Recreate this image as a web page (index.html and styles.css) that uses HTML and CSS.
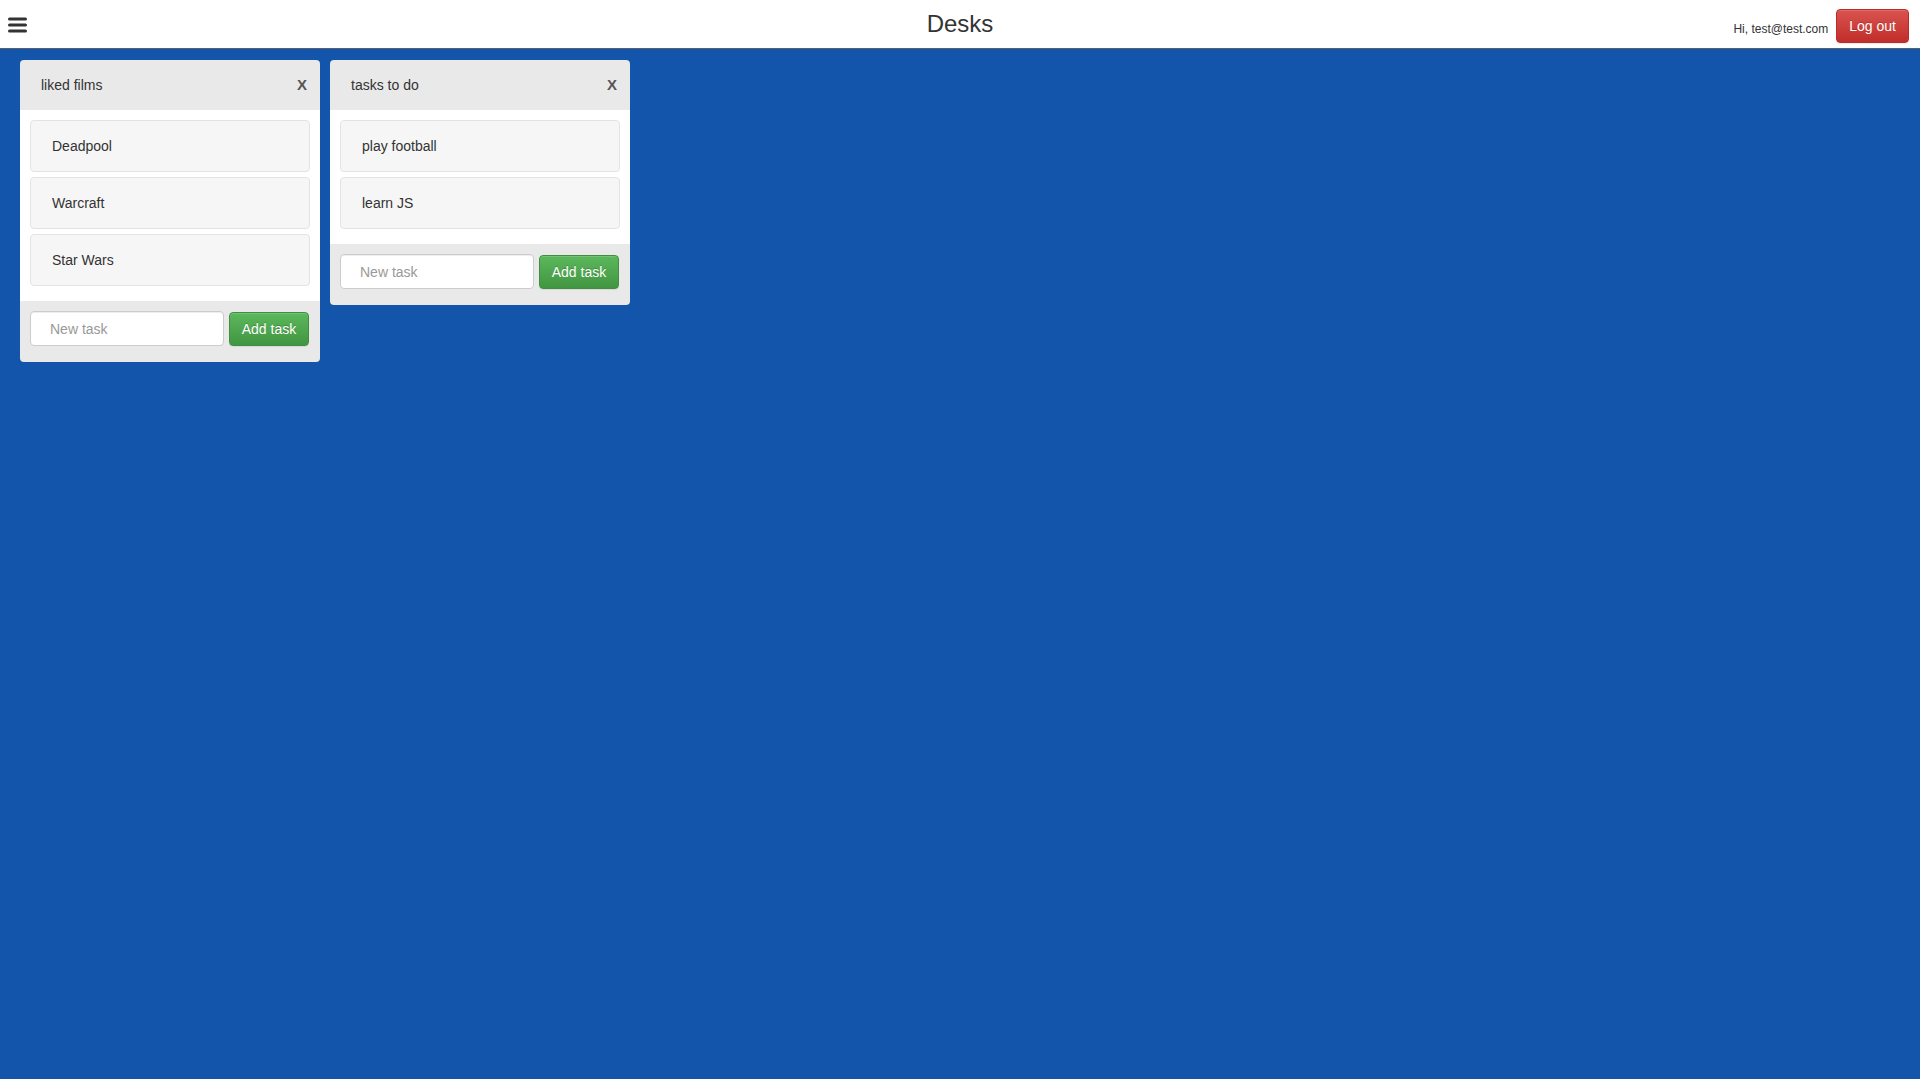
FILE: index.html
```html
<!DOCTYPE html>
<html>
<head>
<meta charset="utf-8">
<title>Desks</title>
<link rel="stylesheet" href="styles.css">
</head>
<body>
<header class="topbar">
  <div class="menu">
    <svg width="20" height="16" viewBox="0 0 20 16"><rect x="0" y="0.5" width="19" height="3" rx="1.5" fill="#333"/><rect x="0" y="6.5" width="19" height="3" rx="1.5" fill="#333"/><rect x="0" y="12.5" width="19" height="3" rx="1.5" fill="#333"/></svg>
  </div>
  <h1 class="title">Desks</h1>
  <div class="user">
    <span class="hello">Hi, test@test.com</span>
    <button class="btn btn-danger">Log out</button>
  </div>
</header>
<main class="board">
  <section class="desk">
    <div class="desk-head"><span>liked films</span><span class="close">X</span></div>
    <div class="desk-body">
      <div class="task">Deadpool</div>
      <div class="task">Warcraft</div>
      <div class="task">Star Wars</div>
    </div>
    <div class="desk-foot">
      <input class="input" type="text" placeholder="New task">
      <button class="btn btn-success">Add task</button>
    </div>
  </section>
  <section class="desk">
    <div class="desk-head"><span>tasks to do</span><span class="close">X</span></div>
    <div class="desk-body">
      <div class="task">play football</div>
      <div class="task">learn JS</div>
    </div>
    <div class="desk-foot">
      <input class="input" type="text" placeholder="New task">
      <button class="btn btn-success">Add task</button>
    </div>
  </section>
</main>
</body>
</html>
```

FILE: styles.css
```css
* { box-sizing: border-box; }
html, body { height: 100%; }
body {
  margin: 0;
  font-family: "Liberation Sans", Arial, Helvetica, sans-serif;
  font-size: 14px;
  line-height: 20px;
  color: #333;
  background: #1355ab;
  display: flex;
  flex-direction: column;
}
.topbar {
  height: 49px;
  background: #fff;
  border-bottom: 1px solid #5a5f6a;
  display: flex;
  align-items: center;
  position: relative;
  padding: 0 11px 0 8px;
}
.menu { width: 20px; height: 16px; margin-top: 1px; }
.menu svg { display: block; }
.title {
  position: absolute;
  left: 0; right: 0;
  top: 0;
  margin: 0;
  text-align: center;
  font-weight: normal;
  font-size: 24px;
  line-height: 48px;
  pointer-events: none;
  margin-top: 0;
}
.user {
  margin-left: auto;
  display: flex;
  align-items: center;
  gap: 8px;
  margin-top: 3px;
}
.hello { font-size: 12px; margin-top: 7px; }
.btn {
  font-family: inherit;
  font-size: 14px;
  line-height: 20px;
  padding: 6px 12px;
  border-radius: 4px;
  color: #fff;
  cursor: pointer;
  text-shadow: 0 -1px 0 rgba(0,0,0,.2);
  box-shadow: inset 0 1px 0 rgba(255,255,255,.15), 0 1px 1px rgba(0,0,0,.075);
  height: 34px;
}
.btn-danger {
  background: linear-gradient(to bottom, #d9534f 0, #c12e2a 100%);
  border: 1px solid #b92c28;
}
.btn-success {
  background: linear-gradient(to bottom, #5cb85c 0, #419641 100%);
  border: 1px solid #3e8f3e;
}
.board {
  flex: 1;
  display: flex;
  align-items: flex-start;
  gap: 10px;
  padding: 11px 20px;
}
.desk {
  width: 300px;
  background: #e9e9e9;
  border-radius: 4px;
  overflow: hidden;
}
.desk-head {
  height: 50px;
  display: flex;
  align-items: center;
  justify-content: space-between;
  padding: 0 13px 0 21px;
}
.close { font-weight: bold; font-size: 15px; color: #555; }
.desk-body {
  background: #fff;
  padding: 10px 10px 15px;
  display: flex;
  flex-direction: column;
  gap: 5px;
}
.task {
  background: #f6f6f6;
  border: 1px solid #e3e3e3;
  border-radius: 4px;
  padding: 15px 21px;
  height: 52px;
}
.desk-foot {
  display: flex;
  align-items: flex-end;
  gap: 5px;
  padding: 10px 11px 16px 10px;
}
.input {
  width: 194px;
  height: 35px;
  font-family: inherit;
  font-size: 14px;
  padding: 6px 19px;
  border: 1px solid #ccc;
  border-radius: 4px;
  box-shadow: inset 0 1px 1px rgba(0,0,0,.075);
  color: #555;
  outline: none;
}
.input::placeholder { color: #999; }
.desk-foot .btn { width: 80px; padding: 6px 0; text-align: center; }
```
